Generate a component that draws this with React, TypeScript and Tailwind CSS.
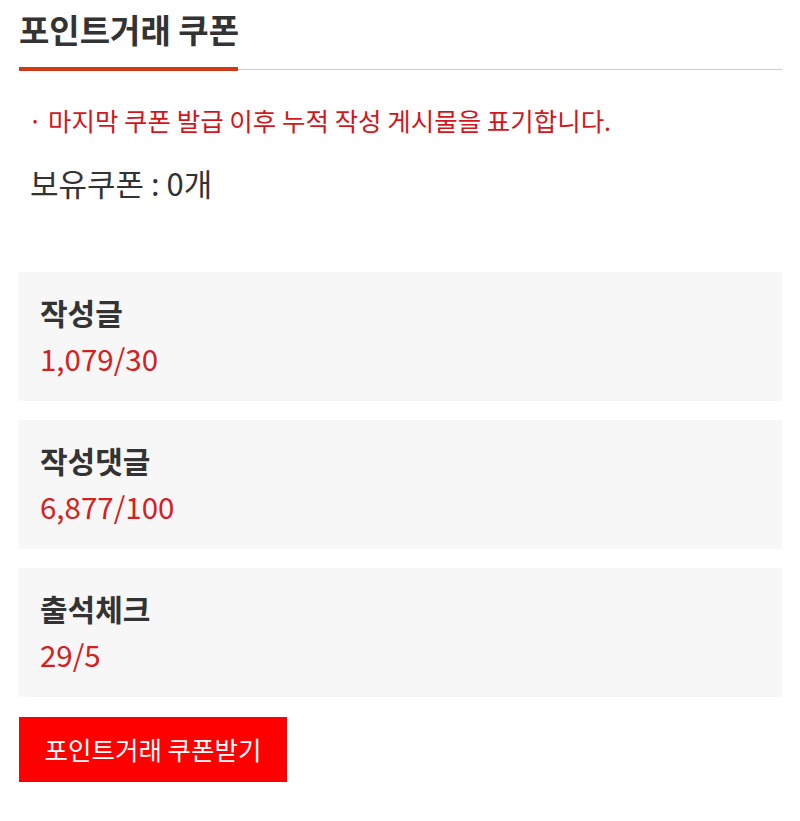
import React from 'react';

interface StatItem {
  label: string;
  value: string;
}

const STATS: StatItem[] = [
  { label: '작성글', value: '1,079/30' },
  { label: '작성댓글', value: '6,877/100' },
  { label: '출석체크', value: '29/5' },
];

const FONT = { fontFamily: '"Noto Sans CJK KR", "Noto Sans", sans-serif' };

export default function App() {
  return (
    <div className="min-h-[821px] bg-white px-[19px] pr-[18px]" style={FONT}>
      {/* Header */}
      <div className="pt-[8px]">
        <h2 className="text-[33px] leading-[42px] font-bold text-[#333333]">포인트거래 쿠폰</h2>
        <div className="relative mt-[19px] h-px bg-[#cccccc]">
          <div className="absolute left-0 top-[-2px] h-[4px] w-[219px] bg-[#d13a16]" />
        </div>
      </div>

      {/* Notice */}
      <p className="mt-[34px] pl-[9px] text-[25.5px] leading-[32px] text-[#d2161c]">
        · 마지막 쿠폰 발급 이후 누적 작성 게시물을 표기합니다.
      </p>
      <p className="mt-[29px] pl-[11px] text-[31px] leading-[36px] text-[#333333]">보유쿠폰 : 0개</p>

      {/* Stats */}
      <div className="mt-[71px] flex flex-col gap-[19px]">
        {STATS.map((s) => (
          <div key={s.label} className="h-[129px] bg-[#f7f7f7] pl-[21px] pt-[21px]">
            <div className="text-[30px] leading-[38px] font-bold text-[#333333]">{s.label}</div>
            <div className="mt-[8px] text-[29.5px] leading-[38px] text-[#d42020]">{s.value}</div>
          </div>
        ))}
      </div>

      {/* Button */}
      <button className="mt-[20px] flex h-[65px] w-[268px] items-center justify-center bg-[#ff0000] text-[25.5px] text-white">
        포인트거래 쿠폰받기
      </button>
    </div>
  );
}
